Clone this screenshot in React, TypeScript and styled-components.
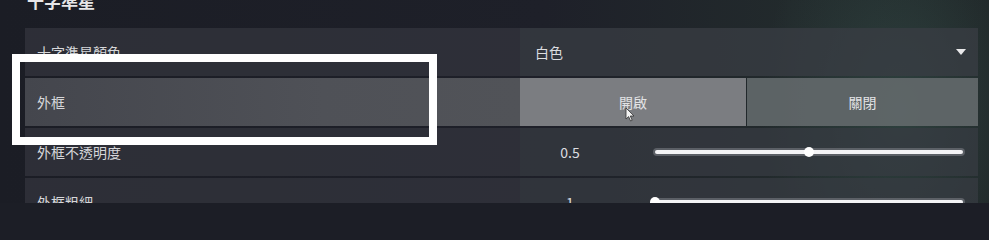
import React from "react";
import styled, { createGlobalStyle } from "styled-components";

const GlobalStyle = createGlobalStyle`
  html, body {
    margin: 0;
    padding: 0;
    height: 203px;
    overflow: hidden;
    background: #1c1e26;
  }
  body {
    font-family: "Noto Sans CJK TC", "Noto Sans", sans-serif;
    color: #dcdde0;
  }
`;

const Page = styled.div`
  position: relative;
  display: flow-root;
  width: 989px;
  height: 203px;
  overflow: hidden;
  box-sizing: border-box;
  padding: 0 11px 0 25px;
  background:
    radial-gradient(ellipse 140px 220px at 900px 110px, rgba(70, 110, 100, 0.35), transparent),
    linear-gradient(90deg, #1b1d25 0%, #1e2029 55%, #222a2c 80%, #1f2527 100%);
`;

const Title = styled.h2`
  margin: -13px 0 0 2px;
  height: 28px;
  font-size: 17px;
  font-weight: 700;
  line-height: 28px;
  color: #e6e6e8;
`;

const List = styled.div`
  display: flex;
  flex-direction: column;
  gap: 2px;
  margin-top: 13px;
`;

const Row = styled.div`
  display: grid;
  grid-template-columns: 495px 1fr;
  height: 48px;
`;

const Label = styled.div<{ $active?: boolean }>`
  display: flex;
  align-items: center;
  padding-left: 12px;
  font-size: 14px;
  color: #d6d7da;
  background: ${(p) =>
    p.$active
      ? "linear-gradient(90deg, #44464d 0%, #4f5157 60%, #515358 100%)"
      : "rgba(52, 54, 63, 0.7)"};
`;

const Select = styled.div`
  display: flex;
  align-items: center;
  justify-content: space-between;
  padding: 0 12px 0 15px;
  font-size: 14px;
  background: rgba(58, 62, 68, 0.75);
`;

const Caret = styled.span`
  width: 0;
  height: 0;
  border-left: 5px solid transparent;
  border-right: 5px solid transparent;
  border-top: 6px solid #e8e8ea;
`;

const Toggle = styled.div`
  display: grid;
  grid-template-columns: 226px 1fr;
  gap: 1px;
`;

const ToggleButton = styled.div<{ $on?: boolean }>`
  display: flex;
  align-items: center;
  justify-content: center;
  font-size: 14px;
  color: #e2e3e5;
  background: ${(p) => (p.$on ? "#7b7d81" : "rgba(98, 104, 106, 0.92)")};
`;

const SliderCell = styled.div`
  display: grid;
  grid-template-columns: 100px 1fr;
  align-items: center;
  padding-right: 15px;
  background: rgba(56, 60, 66, 0.72);
`;

const Value = styled.span`
  text-align: center;
  font-size: 14px;
  color: #dcdde0;
`;

const Track = styled.div`
  position: relative;
  margin-left: 35px;
  height: 4px;
  border-radius: 3px;
  background: #f4f4f6;
  box-shadow: 0 0 0 2px rgba(120, 124, 130, 0.6);
`;

const Thumb = styled.span`
  position: absolute;
  top: 50%;
  width: 10px;
  height: 10px;
  border-radius: 50%;
  background: #ffffff;
  transform: translate(-50%, -50%);
`;

const Highlight = styled.div`
  position: absolute;
  left: 12px;
  top: 54px;
  width: 425px;
  height: 91px;
  box-sizing: border-box;
  border: 8px solid #ffffff;
  pointer-events: none;
`;

const Pointer = styled.svg`
  position: absolute;
  left: 625px;
  top: 107px;
`;

const sliders = [
  { label: "外框不透明度", value: "0.5", pos: 0.5 },
  { label: "外框粗細", value: "1", pos: 0 },
];

export default function App() {
  return (
    <>
      <GlobalStyle />
      <Page>
        <Title>十字準星</Title>
        <List>
          <Row>
            <Label>十字準星顏色</Label>
            <Select>
              白色
              <Caret />
            </Select>
          </Row>
          <Row>
            <Label $active>外框</Label>
            <Toggle>
              <ToggleButton $on>開啟</ToggleButton>
              <ToggleButton>關閉</ToggleButton>
            </Toggle>
          </Row>
          {sliders.map((s) => (
            <Row key={s.label}>
              <Label>{s.label}</Label>
              <SliderCell>
                <Value>{s.value}</Value>
                <Track>
                  <Thumb style={{ left: `${s.pos * 100}%` }} />
                </Track>
              </SliderCell>
            </Row>
          ))}
        </List>
        <Highlight />
        <Pointer width="10" height="15" viewBox="0 0 10 15">
          <path d="M1 1 L1 12 L3.6 9.6 L5.6 14 L7.2 13.3 L5.3 9 L9 9 Z" fill="#f2f2f2" stroke="#333" strokeWidth="0.8" />
        </Pointer>
      </Page>
    </>
  );
}
